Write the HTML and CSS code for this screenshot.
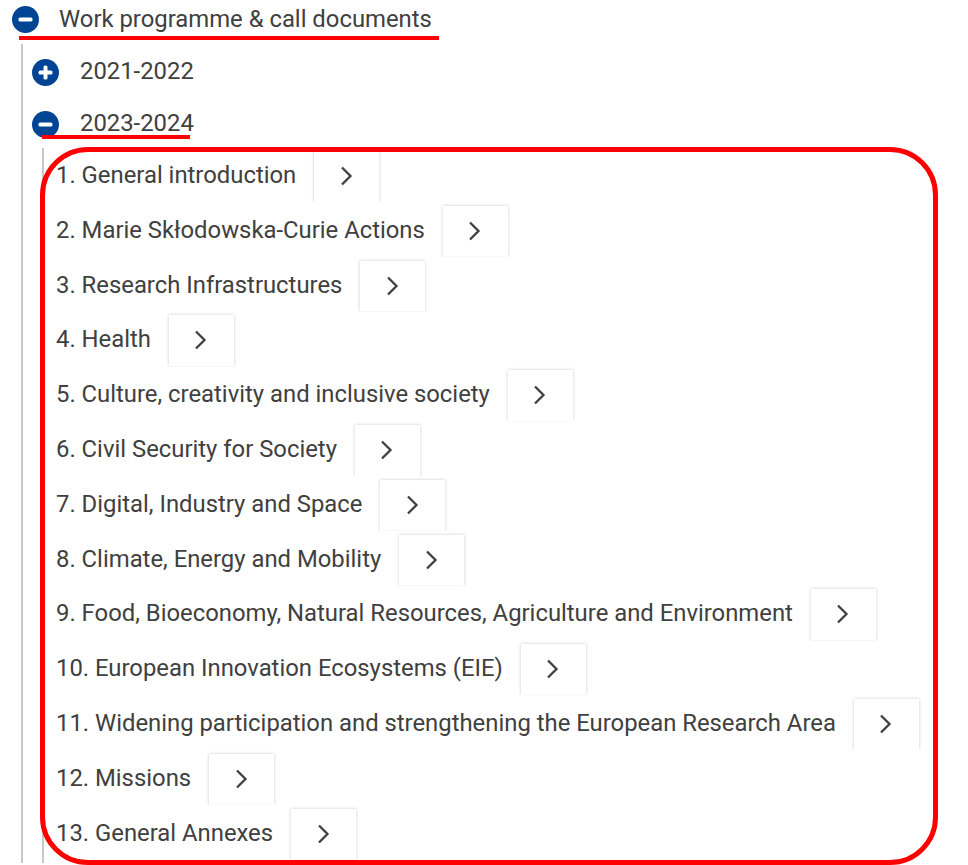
FILE: index.html
```html
<!DOCTYPE html>
<html lang="en">
<head>
<meta charset="utf-8">
<title>Work programme &amp; call documents</title>
<link rel="stylesheet" href="styles.css">
</head>
<body>
<svg width="0" height="0" class="defs" aria-hidden="true">
  <symbol id="minus" viewBox="0 0 27 27"><circle cx="13.5" cy="13.5" r="13.5" fill="#004494"/><rect x="6.5" y="11.5" width="14" height="4" rx="1.5" fill="#fff"/></symbol>
  <symbol id="plus" viewBox="0 0 27 27"><circle cx="13.5" cy="13.5" r="13.5" fill="#004494"/><rect x="6.5" y="11.5" width="14" height="4" rx="1.5" fill="#fff"/><rect x="11.5" y="6.5" width="4" height="14" rx="1.5" fill="#fff"/></symbol>
  <symbol id="chev" viewBox="0 0 14 20"><path d="M2 1.5 L10.5 10 L2 18.5" fill="none" stroke="#404040" stroke-width="2.3"/></symbol>
</svg>
<main class="tree">
  <div class="head level0"><svg class="toggle"><use href="#minus"/></svg><span class="label">Work programme &amp; call documents</span></div>
  <div class="branch branch1">
    <div class="head level1"><svg class="toggle"><use href="#plus"/></svg><span class="label">2021-2022</span></div>
    <div class="head level1 open"><svg class="toggle"><use href="#minus"/></svg><span class="label">2023-2024</span></div>
    <ul class="branch branch2">
      <li class="row"><a class="doc">1. General introduction</a><button class="go"><svg class="chev"><use href="#chev"/></svg></button></li>
      <li class="row"><a class="doc">2. Marie Skłodowska-Curie Actions</a><button class="go"><svg class="chev"><use href="#chev"/></svg></button></li>
      <li class="row"><a class="doc">3. Research Infrastructures</a><button class="go"><svg class="chev"><use href="#chev"/></svg></button></li>
      <li class="row"><a class="doc">4. Health</a><button class="go"><svg class="chev"><use href="#chev"/></svg></button></li>
      <li class="row"><a class="doc">5. Culture, creativity and inclusive society</a><button class="go"><svg class="chev"><use href="#chev"/></svg></button></li>
      <li class="row"><a class="doc">6. Civil Security for Society</a><button class="go"><svg class="chev"><use href="#chev"/></svg></button></li>
      <li class="row"><a class="doc">7. Digital, Industry and Space</a><button class="go"><svg class="chev"><use href="#chev"/></svg></button></li>
      <li class="row"><a class="doc">8. Climate, Energy and Mobility</a><button class="go"><svg class="chev"><use href="#chev"/></svg></button></li>
      <li class="row"><a class="doc">9. Food, Bioeconomy, Natural Resources, Agriculture and Environment</a><button class="go"><svg class="chev"><use href="#chev"/></svg></button></li>
      <li class="row"><a class="doc">10. European Innovation Ecosystems (EIE)</a><button class="go"><svg class="chev"><use href="#chev"/></svg></button></li>
      <li class="row"><a class="doc">11. Widening participation and strengthening the European Research Area</a><button class="go"><svg class="chev"><use href="#chev"/></svg></button></li>
      <li class="row"><a class="doc">12. Missions</a><button class="go"><svg class="chev"><use href="#chev"/></svg></button></li>
      <li class="row"><a class="doc">13. General Annexes</a><button class="go"><svg class="chev"><use href="#chev"/></svg></button></li>
    </ul>
  </div>
</main>
<div class="mark line-a"></div>
<div class="mark line-b"></div>
<div class="mark frame"></div>
</body>
</html>
```
FILE: styles.css
```css
html, body {
  margin: 0;
  height: 865px;
  overflow: hidden;
  background: #fff;
}
.defs { position: absolute; }
.tree {
  font-family: Roboto, "Liberation Sans", sans-serif;
  font-size: 23.85px;
  color: #404040;
  padding: 6px 0 0 12px;
}
.head {
  display: flex;
  align-items: center;
  height: 26px;
}
.toggle {
  width: 27px;
  height: 27px;
  flex: none;
}
.label { line-height: 26px; }
.level0 .label { margin-left: 20px; }
.level1 .toggle { margin-top: 2px; }
.level1 .label { margin-left: 21px; }
.branch1 {
  margin: 12px 0 0 9px;
  border-left: 2px solid #c8c8c8;
  padding: 14px 0 0 9px;
}
.level1 + .level1 { margin-top: 26px; }
.branch2 {
  list-style: none;
  margin: 12px 0 0 10px;
  padding: 3px 0 0 12px;
  border-left: 2px solid #c8c8c8;
}
.row {
  display: flex;
  align-items: flex-start;
  height: 54.8px;
}
.doc {
  line-height: 49px;
  white-space: nowrap;
}
.go {
  flex: none;
  width: 65px;
  height: 51px;
  margin-left: 18px;
  padding: 0 0 1px;
  border: 0;
  background: #fff;
  box-shadow: 0 0 3px rgba(0,0,0,.22);
  clip-path: inset(-4px -4px 0 -4px);
  display: flex;
  align-items: center;
  justify-content: center;
}
.chev { width: 14px; height: 20px; }
.mark { position: absolute; }
.line-a { left: 19px; top: 36px; width: 420px; height: 4px; background: #f00; }
.line-b { left: 42px; top: 135px; width: 148px; height: 4px; background: #f00; }
.frame {
  left: 40px;
  top: 147px;
  width: 888px;
  height: 708px;
  border: 5px solid #f00;
  border-radius: 48px;
}
```
